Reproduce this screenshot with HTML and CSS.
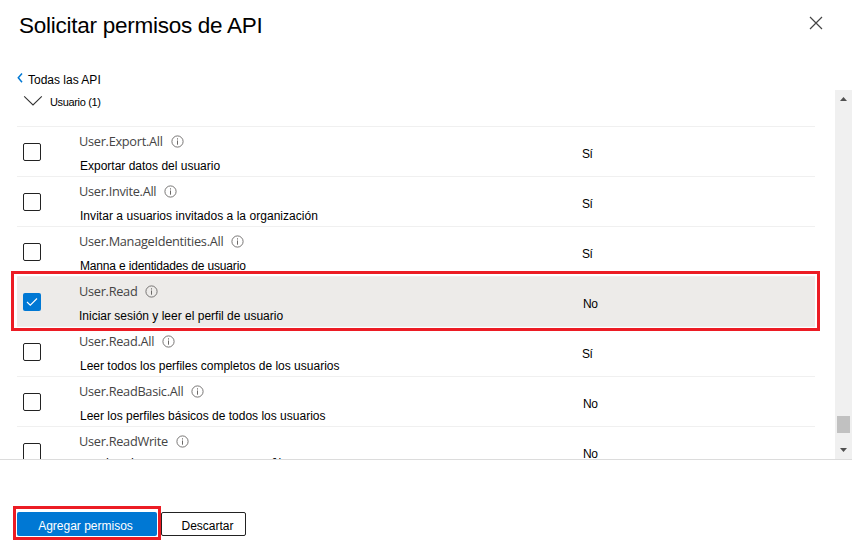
FILE: index.html
```html
<!DOCTYPE html>
<html lang="es">
<head>
<meta charset="utf-8">
<title>Solicitar permisos de API</title>
<link rel="stylesheet" href="styles.css">
</head>
<body>
<svg class="defs" width="0" height="0" aria-hidden="true">
  <symbol id="info" viewBox="0 0 13 13"><circle cx="6.5" cy="6.5" r="5.6" fill="none" stroke="#6a6866" stroke-width="0.9"/><path d="M6.5 5.5V9.7M6.5 3.3V4.5" stroke="#6a6866" stroke-width="1"/></symbol>
</svg>
<header class="header">
  <h1 class="title">Solicitar permisos de API</h1>
  <svg class="close" width="14" height="14" viewBox="0 0 14 14"><path d="M1 1L13 13M13 1L1 13" stroke="#444" stroke-width="1.2"/></svg>
</header>
<a class="back"><svg width="6" height="10" viewBox="0 0 6 10"><path d="M5 .6L1.3 4.8L5 9.2" fill="none" stroke="#0078d4" stroke-width="1.5"/></svg><span>Todas las API</span></a>
<main class="viewport">
  <div class="list">
    <div class="group"><svg width="20" height="12" viewBox="0 0 20 12"><path d="M1.2 1.3L10 10L18.8 1.3" fill="none" stroke="#333" stroke-width="1.1"/></svg><span>Usuario (1)</span></div>
    <div class="row"><i class="check"></i><div class="perm"><div class="name"><span>User.Export.All</span><svg><use href="#info"/></svg></div><p class="desc">Exportar datos del usuario</p></div><span class="consent">Sí</span></div>
    <div class="row"><i class="check"></i><div class="perm"><div class="name"><span>User.Invite.All</span><svg><use href="#info"/></svg></div><p class="desc wide">Invitar a usuarios invitados a la organización</p></div><span class="consent">Sí</span></div>
    <div class="row"><i class="check"></i><div class="perm"><div class="name"><span>User.ManageIdentities.All</span><svg><use href="#info"/></svg></div><p class="desc tight">Manna e identidades de usuario</p></div><span class="consent">Sí</span></div>
    <div class="row selected"><i class="check"><svg width="18" height="18" viewBox="0 0 18 18"><path d="M4 9L7.3 12.2L14 5.5" fill="none" stroke="#fff" stroke-width="1.1"/></svg></i><div class="perm"><div class="name"><span>User.Read</span><svg><use href="#info"/></svg></div><p class="desc">Iniciar sesión y leer el perfil de usuario</p></div><span class="consent no">No</span></div>
    <div class="row"><i class="check"></i><div class="perm"><div class="name"><span>User.Read.All</span><svg><use href="#info"/></svg></div><p class="desc">Leer todos los perfiles completos de los usuarios</p></div><span class="consent">Sí</span></div>
    <div class="row"><i class="check"></i><div class="perm"><div class="name"><span>User.ReadBasic.All</span><svg><use href="#info"/></svg></div><p class="desc">Leer los perfiles básicos de todos los usuarios</p></div><span class="consent no">No</span></div>
    <div class="row"><i class="check"></i><div class="perm"><div class="name"><span>User.ReadWrite</span><svg><use href="#info"/></svg></div><p class="desc original">Read and write access to user profile</p></div><span class="consent no">No</span></div>
  </div>
  <div class="scrollbar">
    <svg width="7" height="4" viewBox="0 0 7 4"><path d="M0 4L3.5 0L7 4Z" fill="#505050"/></svg>
    <div class="thumb"></div>
    <svg width="7" height="4" viewBox="0 0 7 4"><path d="M0 0L3.5 4L7 0Z" fill="#505050"/></svg>
  </div>
</main>
<footer class="footer">
  <div class="callout"><button class="btn primary">Agregar permisos</button></div>
  <button class="btn">Descartar</button>
</footer>
</body>
</html>
```
FILE: styles.css
```css
*, *::after { box-sizing: border-box; }
body { margin: 0; width: 852px; height: 555px; overflow: hidden; background: #fff; color: #000; font: 12px/16px "Liberation Sans", Arial, sans-serif; }
svg { display: block; flex: none; }
.defs { position: absolute; }
.header { display: flex; justify-content: space-between; height: 70px; padding: 12px 29px 0 19px; }
.title { margin: 0; font-size: 22.5px; line-height: 28px; font-weight: 400; letter-spacing: -.26px; white-space: nowrap; }
.close { margin-top: 4px; }
.back { display: flex; height: 20px; padding: 2px 0 0 17px; gap: 5px; }
.back svg { margin-top: 1px; }
.viewport { display: flex; height: 370px; border-bottom: 1px solid #dcdcdc; overflow: hidden; }
.list { width: 798px; margin-left: 17px; flex: none; }
.group { display: flex; height: 36px; padding: 5px 0 0 6px; gap: 7px; font-size: 11px; line-height: 15px; letter-spacing: -.35px; }
.row { display: flex; height: 50px; border-top: 1px solid #f0f0f0; }
.check { width: 18px; height: 18px; margin: 16px 0 0 6px; border: 1px solid #222; border-radius: 2px; flex: none; }
.perm { width: 503px; margin-left: 38px; flex: none; }
.name { display: flex; gap: 8px; margin-top: 5px; height: 18px; align-items: center; font: 12.75px/18px "Open Sans", "Noto Sans", sans-serif; letter-spacing: -.29px; color: #444; white-space: nowrap; }
.name svg { width: 13px; height: 13px; margin-top: 1px; }
.desc { margin: 8px 0 0 1px; white-space: nowrap; }
.wide { letter-spacing: .04px; }
.tight { letter-spacing: -.17px; }
.original { margin-top: 4px; font: 12.75px/18px "Open Sans", "Noto Sans", sans-serif; letter-spacing: -.27px; }
.consent { margin: 19px 0 0 0; letter-spacing: -.4px; }
.no { margin-left: 1px; }
.selected { position: relative; background: #edebe9; }
.selected::after { content: ""; position: absolute; left: -6px; top: -6px; width: 809px; height: 60px; border: 3px solid #ec1c24; }
.selected .desc { margin-left: 0; }
.selected .check { background: #0078d4; border: 0; }
.scrollbar { width: 17px; margin-left: 20px; flex: none; background: #f0f0f0; display: flex; flex-direction: column; align-items: center; padding: 7px 0; }
.thumb { width: 13px; height: 17px; margin: auto 0 15px; background: #c1c1c1; }
.footer { display: flex; padding: 46px 0 0 13px; }
.callout { width: 148px; height: 34px; border: 3px solid #ec1c24; padding: 3px 1px; }
.btn { display: block; width: 85px; height: 24px; margin-top: 6px; padding: 4px 0 0 8px; border: 1px solid #222; border-radius: 2px; background: #fff; font: inherit; color: #000; }
.primary { width: 140px; margin: 0; padding: 4px 3px 0 0; border: 0; background: #0078d4; color: #fff; }
```
